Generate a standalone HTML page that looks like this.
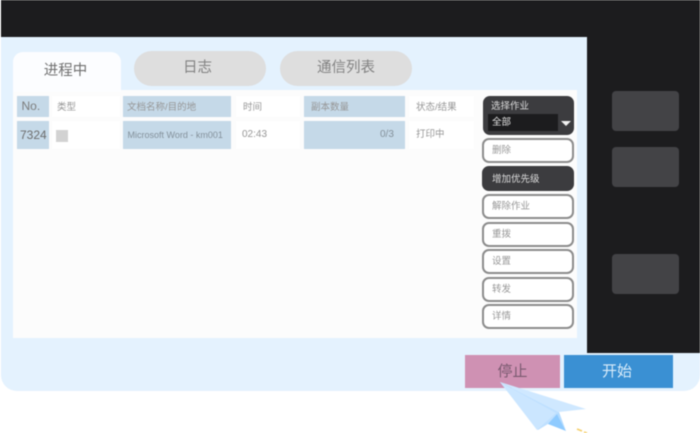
<!DOCTYPE html>
<html lang="zh">
<head>
<meta charset="utf-8">
<style>
html,body{margin:0;padding:0;background:#fff}
#p{position:relative;width:700px;height:433px;overflow:hidden;background:#fff;font-family:"Liberation Sans","Noto Sans CJK SC",sans-serif;filter:blur(.5px)}
#p div{position:absolute;box-sizing:border-box;white-space:nowrap}
.c{font-size:9.5px;color:#969696;line-height:1}
.b{background:#c5d9e8}
.w{background:#fff}
.btn{left:482px;width:92px;border:2px solid #8c8c8c;border-radius:7px;background:#fff;font-size:9.5px;color:#969696;padding-left:8px}
.g{left:612px;width:67px;background:#434346;border-radius:4px}
.tab{top:51px;height:35px;background:#dedede;border-radius:18px;text-align:center;line-height:35px;font-size:14.5px;color:#828282}
</style>
</head>
<body>
<div id="p">
<div style="left:1px;top:0;width:699px;height:391px;background:#e4f2fe;border-radius:0 0 16px 16px"></div>
<div style="left:1px;top:0;width:699px;height:37px;background:#1c1c1e"></div>
<div style="left:587px;top:0;width:113px;height:353px;background:#1c1c1e"></div>
<div class="g" style="top:91px;height:40px"></div>
<div class="g" style="top:147px;height:40px"></div>
<div class="g" style="top:254px;height:40px"></div>

<div style="left:13px;top:90px;width:564px;height:248px;background:#fcfcfc"></div>
<div style="left:13px;top:52px;width:108px;height:40px;background:#fcfdff;border-radius:10px 10px 0 0;text-align:center;line-height:38px;font-size:14.5px;color:#707070;padding-right:3px">进程中</div>
<div class="tab" style="left:134px;width:132px;padding-right:5px">日志</div>
<div class="tab" style="left:280px;width:132px">通信列表</div>

<div class="b" style="left:17px;top:96px;width:32px;height:21px"></div>
<div class="w" style="left:52px;top:96px;width:68px;height:21px"></div>
<div class="b" style="left:123px;top:96px;width:108px;height:21px"></div>
<div class="w" style="left:236px;top:96px;width:64px;height:21px"></div>
<div class="b" style="left:304px;top:96px;width:101px;height:21px"></div>
<div class="w" style="left:409px;top:96px;width:65px;height:21px"></div>

<div class="b" style="left:17px;top:121px;width:32px;height:28px"></div>
<div class="w" style="left:52px;top:121px;width:68px;height:28px"></div>
<div class="b" style="left:123px;top:121px;width:108px;height:28px"></div>
<div class="w" style="left:236px;top:121px;width:64px;height:28px"></div>
<div class="b" style="left:304px;top:121px;width:101px;height:28px"></div>
<div class="w" style="left:409px;top:121px;width:65px;height:28px"></div>

<div class="c" style="left:21.5px;top:100px;font-size:12px;color:#7c7c7c">No.</div>
<div class="c" style="left:57px;top:103px">类型</div>
<div class="c" style="left:127px;top:103px">文档名称/目的地</div>
<div class="c" style="left:243px;top:103px">时间</div>
<div class="c" style="left:311px;top:103px">副本数量</div>
<div class="c" style="left:416px;top:103px">状态/结果</div>

<div class="c" style="left:20px;top:129px;font-size:12px;color:#6c6c6c">7324</div>
<div style="left:56px;top:130px;width:12px;height:12px;background:#d2d2d2"></div>
<div class="c" style="left:127.5px;top:131px;font-size:9px;color:#84919b">Microsoft Word - km001</div>
<div class="c" style="left:242px;top:130px;font-size:10px">02:43</div>
<div class="c" style="left:380px;top:130px;font-size:10px;color:#84919b">0/3</div>
<div class="c" style="left:416px;top:130px">打印中</div>

<div style="left:483px;top:96px;width:91px;height:39px;background:#3c3c3f;border-radius:7px"></div>
<div style="left:491px;top:101px;font-size:9.5px;line-height:11px;color:#ddd">选择作业</div>
<div style="left:488px;top:114px;width:70px;height:17px;background:#1c1c1e;font-size:9.5px;line-height:17px;color:#e4e4e4;padding-left:4px">全部</div>
<div style="left:561px;top:121px;width:0;height:0;border-left:5px solid transparent;border-right:5px solid transparent;border-top:5px solid #f2f2f2"></div>

<div class="btn" style="top:138px;height:25px;line-height:21px">删除</div>
<div class="btn" style="top:166px;height:25px;line-height:23px;background:#3c3c3f;border-color:#3c3c3f;color:#ddd">增加优先级</div>
<div class="btn" style="top:194px;height:25px;line-height:21px">解除作业</div>
<div class="btn" style="top:222px;height:25px;line-height:21px">重拨</div>
<div class="btn" style="top:249px;height:25px;line-height:21px">设置</div>
<div class="btn" style="top:277px;height:25px;line-height:21px">转发</div>
<div class="btn" style="top:304px;height:25px;line-height:21px">详情</div>

<div style="left:465px;top:355px;width:95px;height:33px;background:#cf91b3;text-align:center;line-height:33px;font-size:15px;color:#7a5a70">停止</div>
<div style="left:564px;top:355px;width:109px;height:33px;background:#3a90d3;text-align:center;line-height:33px;font-size:15px;color:#d9ecfa;padding-right:3px">开始</div>

<svg style="position:absolute;left:0;top:0" width="700" height="433" viewBox="0 0 700 433">
<polygon points="500,382 586,409 559,412" fill="#cfe8ff"/>
<polygon points="500,382 559,412 557,425 548,424 538,430" fill="#bfe0ff"/>
<polygon points="500,382 556,413 537,430" fill="#cbe6ff"/>
<polygon points="548,424 557,414 566,431" fill="#8fcbff"/>
<polygon points="559,412 566,431 557,414" fill="#b3dbff"/>
<line x1="577" y1="429" x2="582" y2="431" stroke="#f5cf6b" stroke-width="1.6"/>
<line x1="584" y1="432" x2="587" y2="433" stroke="#f5cf6b" stroke-width="1.6"/>
</svg>
</div>
</body>
</html>
